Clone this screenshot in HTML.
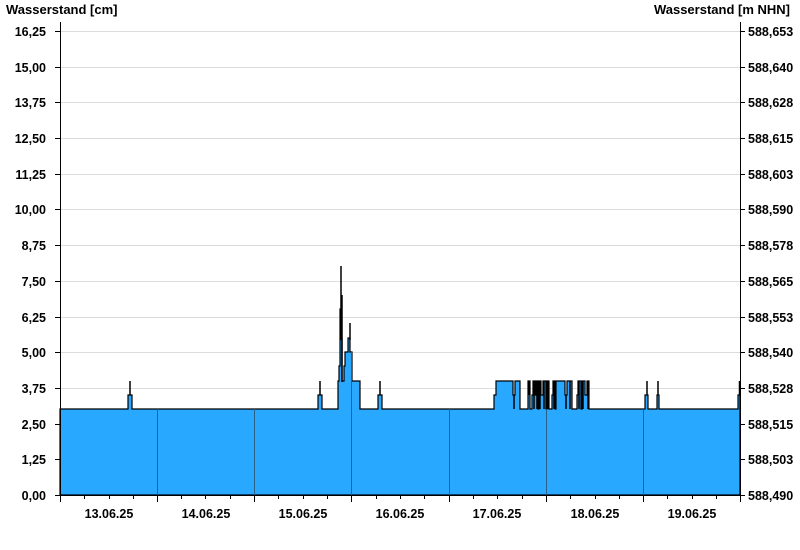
<!DOCTYPE html>
<html><head><meta charset="utf-8"><style>
html,body{margin:0;padding:0;background:#fff;width:800px;height:550px;overflow:hidden}
svg{display:block}
text{font-family:"Liberation Sans",Arial,sans-serif;font-weight:bold;font-size:12.5px;fill:#000}
text.t{font-size:13px}
</style></head><body>
<svg width="800" height="550" viewBox="0 0 800 550" xmlns="http://www.w3.org/2000/svg">
<defs>
<clipPath id="fc"><path id="fp" d="M60,495 L60,409 L128,409 L128,395 L132,395 L132,409 L318,409 L318,395 L322,395 L322,409 L338,409 L338,381 L339,381 L339,366 L340,366 L340,309 L341,309 L341,338 L342,338 L342,381 L344,381 L344,366 L345,366 L345,352 L348,352 L348,338 L350,338 L350,352 L352,352 L352,381 L360,381 L360,409 L378,409 L378,395 L382,395 L382,409 L494,409 L494,395 L496,395 L496,381 L513,381 L513,395 L515,395 L515,381 L520,381 L520,409 L528,409 L528,381 L530,381 L530,409 L532,409 L532,395 L533,395 L533,381 L535,381 L535,395 L536,395 L536,381 L538,381 L538,409 L539,409 L539,381 L541,381 L541,395 L543,395 L543,381 L546,381 L546,409 L547,409 L547,381 L549,381 L549,409 L552,409 L552,395 L553,395 L553,381 L555,381 L555,409 L556,409 L556,381 L565,381 L565,395 L567,395 L567,381 L572,381 L572,409 L577,409 L577,395 L578,395 L578,381 L581,381 L581,409 L582,409 L582,381 L585,381 L585,395 L587,395 L587,381 L589,381 L589,409 L645,409 L645,395 L648,395 L648,409 L657,409 L657,395 L659,395 L659,409 L738,409 L738,395 L740,395 L740,495 Z"/></clipPath>
</defs>
<g stroke="#dcdcdc" stroke-width="1">
<line x1="60" x2="740" y1="31.5" y2="31.5"/><line x1="60" x2="740" y1="67.5" y2="67.5"/><line x1="60" x2="740" y1="102.5" y2="102.5"/><line x1="60" x2="740" y1="138.5" y2="138.5"/><line x1="60" x2="740" y1="174.5" y2="174.5"/><line x1="60" x2="740" y1="209.5" y2="209.5"/><line x1="60" x2="740" y1="245.5" y2="245.5"/><line x1="60" x2="740" y1="281.5" y2="281.5"/><line x1="60" x2="740" y1="317.5" y2="317.5"/><line x1="60" x2="740" y1="352.5" y2="352.5"/><line x1="60" x2="740" y1="388.5" y2="388.5"/><line x1="60" x2="740" y1="424.5" y2="424.5"/><line x1="60" x2="740" y1="459.5" y2="459.5"/>
</g>
<use href="#fp" fill="#29a8ff" stroke="#000" stroke-width="1.2"/>
<g clip-path="url(#fc)" stroke="#2a5f86" stroke-width="1">
<line x1="157.5" x2="157.5" y1="300" y2="495"/><line x1="254.5" x2="254.5" y1="300" y2="495"/><line x1="351.5" x2="351.5" y1="300" y2="495"/><line x1="449.5" x2="449.5" y1="300" y2="495"/><line x1="546.5" x2="546.5" y1="300" y2="495"/><line x1="643.5" x2="643.5" y1="300" y2="495"/>
</g>
<g stroke="#000" stroke-width="1.5">
<line x1="130" x2="130" y1="395" y2="381"/><line x1="320" x2="320" y1="395" y2="381"/><line x1="341" x2="341" y1="340" y2="266"/><line x1="342" x2="342" y1="382" y2="295"/><line x1="350" x2="350" y1="340" y2="323"/><line x1="380" x2="380" y1="395" y2="381"/><line x1="647" x2="647" y1="395" y2="381"/><line x1="658" x2="658" y1="395" y2="381"/><line x1="739.5" x2="739.5" y1="395" y2="381"/>
<line x1="514" x2="514" y1="409" y2="395"/><line x1="529" x2="529" y1="381" y2="395"/><line x1="534" x2="534" y1="381" y2="409"/><line x1="537" x2="537" y1="381" y2="409"/><line x1="540" x2="540" y1="381" y2="409"/><line x1="544" x2="544" y1="381" y2="409"/><line x1="548" x2="548" y1="381" y2="409"/><line x1="554" x2="554" y1="381" y2="409"/><line x1="566" x2="566" y1="395" y2="409"/><line x1="570" x2="570" y1="381" y2="409"/><line x1="579" x2="579" y1="381" y2="409"/><line x1="583" x2="583" y1="381" y2="409"/><line x1="588" x2="588" y1="381" y2="409"/>
</g>
<g stroke="#000" stroke-width="1">
<line x1="60.5" x2="60.5" y1="22" y2="502"/><line x1="740.5" x2="740.5" y1="22" y2="495"/><line x1="55" x2="740" y1="495.5" y2="495.5"/>
<path d="M55,31.5H60M55,67.5H60M55,102.5H60M55,138.5H60M55,174.5H60M55,209.5H60M55,245.5H60M55,281.5H60M55,317.5H60M55,352.5H60M55,388.5H60M55,424.5H60M55,459.5H60"/>
<path d="M740,31.5H745M740,67.5H745M740,102.5H745M740,138.5H745M740,174.5H745M740,209.5H745M740,245.5H745M740,281.5H745M740,317.5H745M740,352.5H745M740,388.5H745M740,424.5H745M740,459.5H745M740,495.5H745"/>
<path d="M157.5,495V502M254.5,495V502M351.5,495V502M449.5,495V502M546.5,495V502M643.5,495V502M740.5,495V502"/>
<path d="M84.5,495V499M109.5,495V499M133.5,495V499M181.5,495V499M205.5,495V499M230.5,495V499M278.5,495V499M303.5,495V499M327.5,495V499M376.5,495V499M400.5,495V499M424.5,495V499M473.5,495V499M497.5,495V499M522.5,495V499M570.5,495V499M595.5,495V499M619.5,495V499M667.5,495V499M692.5,495V499M716.5,495V499"/>
</g>
<text class="t" x="6" y="14">Wasserstand [cm]</text>
<text class="t" x="790" y="14" text-anchor="end">Wasserstand [m NHN]</text>
<g text-anchor="end">
<text x="46" y="36">16,25</text><text x="46" y="72">15,00</text><text x="46" y="107">13,75</text><text x="46" y="143">12,50</text><text x="46" y="179">11,25</text><text x="46" y="214">10,00</text><text x="46" y="250">8,75</text><text x="46" y="286">7,50</text><text x="46" y="322">6,25</text><text x="46" y="357">5,00</text><text x="46" y="393">3,75</text><text x="46" y="429">2,50</text><text x="46" y="464">1,25</text><text x="46" y="500">0,00</text>
</g>
<g>
<text x="748" y="36">588,653</text><text x="748" y="72">588,640</text><text x="748" y="107">588,628</text><text x="748" y="143">588,615</text><text x="748" y="179">588,603</text><text x="748" y="214">588,590</text><text x="748" y="250">588,578</text><text x="748" y="286">588,565</text><text x="748" y="322">588,553</text><text x="748" y="357">588,540</text><text x="748" y="393">588,528</text><text x="748" y="429">588,515</text><text x="748" y="464">588,503</text><text x="748" y="500">588,490</text>
</g>
<g text-anchor="middle">
<text x="109" y="518">13.06.25</text><text x="206" y="518">14.06.25</text><text x="303" y="518">15.06.25</text><text x="400" y="518">16.06.25</text><text x="497" y="518">17.06.25</text><text x="595" y="518">18.06.25</text><text x="692" y="518">19.06.25</text>
</g>
</svg>
</body></html>
